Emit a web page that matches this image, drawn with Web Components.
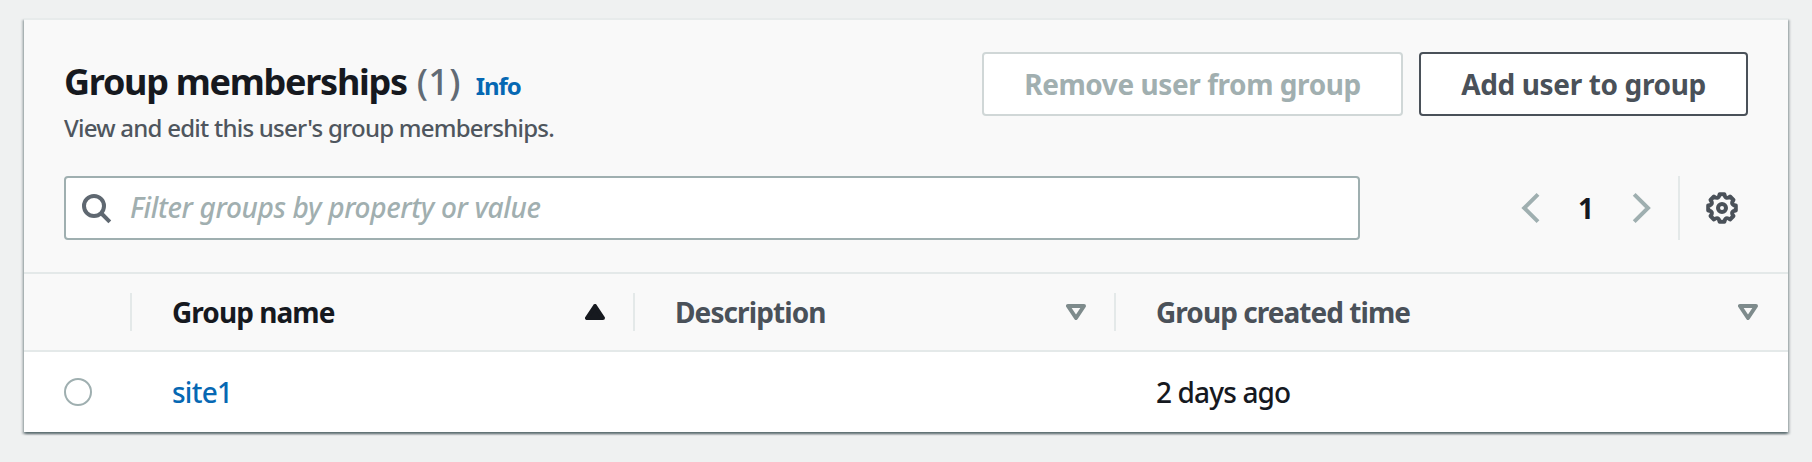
<!DOCTYPE html>
<html lang="en">
<head>
<meta charset="utf-8">
<title>Group memberships</title>
<style>
  body { margin: 0; height: 462px; overflow: hidden; background: #eff1f1; color: #16191f; font: 500 28px/36px "Noto Sans", "Open Sans", sans-serif; }
</style>
</head>
<body>
<membership-panel></membership-panel>
<script>
const define = (name, html, setup) => customElements.define(name, class extends HTMLElement {
  constructor() {
    super();
    const t = document.createElement('template');
    t.innerHTML = html;
    this.attachShadow({ mode: 'open' }).append(t.content.cloneNode(true));
  }
  connectedCallback() { if (setup) setup(this, this.shadowRoot); }
});

define('ui-button', `
<style>
  :host { display: block; }
  button { display: block; box-sizing: border-box; width: 100%; height: 64px; margin: 0; padding: 0; border: 2px solid #4a5159; border-radius: 4px; background: #fff; color: #4a5159; font: bold 28px/36px "Noto Sans", sans-serif; letter-spacing: inherit; white-space: nowrap; }
  :host([disabled]) button { border-color: #d0d7d7; color: #a1afb0; }
</style>
<button type="button"><slot></slot></button>`);

define('panel-header', `
<style>
  :host { display: flex; justify-content: space-between; height: 124px; }
  .text { padding-top: 8px; }
  .title { display: flex; align-items: baseline; height: 44px; line-height: 44px; white-space: nowrap; }
  h2 { margin: 0; font-size: 36px; font-weight: bold; letter-spacing: -1.28px; }
  .count { margin-left: 10px; font-size: 36px; letter-spacing: .3px; color: #616b75; }
  a { margin-left: 15px; font-size: 24px; font-weight: bold; letter-spacing: -1.1px; color: #0668b3; }
  p { margin: 6px 0 0; font-size: 24px; letter-spacing: -.76px; color: #4f565e; white-space: nowrap; }
  .actions { display: flex; gap: 16px; }
  .remove { width: 421px; letter-spacing: -.43px; }
  .add { width: 329px; letter-spacing: -.36px; }
</style>
<div class="text">
  <div class="title"><h2>Group memberships</h2><span class="count">(1)</span><a>Info</a></div>
  <p>View and edit this user's group memberships.</p>
</div>
<div class="actions">
  <ui-button class="remove" disabled>Remove user from group</ui-button>
  <ui-button class="add">Add user to group</ui-button>
</div>`);

define('search-field', `
<style>
  :host { display: flex; align-items: center; box-sizing: border-box; width: 1296px; height: 64px; padding-left: 14px; border: 2px solid #9fafb0; border-radius: 4px; background: #fff; }
  svg { display: block; flex: none; }
  span { margin: 0 0 2px 18px; font-style: italic; letter-spacing: -.35px; color: #a1afb0; }
</style>
<svg width="32" height="32" viewBox="0 0 32 32" fill="none" stroke="#5f6871" stroke-width="4"><circle cx="14" cy="14" r="10"/><path d="M21 21l8.8 8.8"/></svg>
<span>Filter groups by property or value</span>`);

define('page-nav', `
<style>
  :host { display: flex; align-items: center; height: 64px; }
  svg { display: block; }
  b { width: 20px; margin: 0 36px 1px; text-align: center; }
  .settings { display: flex; align-items: center; box-sizing: border-box; height: 64px; margin-left: 26px; padding: 0 10px 0 26px; border-left: 2px solid #e4e9e9; }
</style>
<svg width="20" height="32" viewBox="0 0 20 32" fill="none" stroke="#9fafb0" stroke-width="4"><path d="M18 2.3L4.2 16 18 29.7"/></svg>
<b>1</b>
<svg width="20" height="32" viewBox="0 0 20 32" fill="none" stroke="#9fafb0" stroke-width="4"><path d="M2.2 2.3L16 16 2.2 29.7"/></svg>
<div class="settings"><svg width="32" height="32" viewBox="-16 -16 32 32" fill="none" stroke="#4a5159" stroke-width="4"><path class="cog" stroke-linejoin="round"/><circle r="4"/></svg></div>`,
(host, root) => {
  const p = (r, deg) => [r * Math.sin(deg * Math.PI / 180), -r * Math.cos(deg * Math.PI / 180)].map(n => n.toFixed(2)).join(' ');
  let d = 'M' + p(14, -10);
  for (let a = 0; a < 360; a += 45) d += 'L' + p(14, a + 10) + 'Q' + p(8.6, a + 22.5) + ' ' + p(14, a + 35);
  root.querySelector('.cog').setAttribute('d', d + 'Z');
});

define('column-header', `
<style>
  :host { display: flex; align-items: center; justify-content: space-between; box-sizing: border-box; height: 38px; padding: 0 28px 0 40px; border-right: 2px solid #e4e9e9; color: #4a5159; font-weight: bold; letter-spacing: -.95px; white-space: nowrap; }
  :host([last]) { border-color: transparent; }
  :host([sorted]) { color: #16191f; }
  span { margin-bottom: 0; }
  svg { display: block; flex: none; fill: none; stroke: #7e8b8c; stroke-width: 4; stroke-linejoin: round; }
  :host([sorted]) svg { fill: #16191f; stroke: #16191f; transform: scaleY(-1); }
</style>
<span><slot></slot></span>
<svg width="20" height="16" viewBox="0 0 20 16"><path d="M2 2h16l-8 12z"/></svg>`);

define('group-table', `
<style>
  :host { display: block; }
  .row { display: grid; grid-template-columns: 108px 503px 481px 1fr; align-items: center; }
  .head { box-sizing: border-box; height: 80px; border: solid #e4e9e9; border-width: 2px 0; background: #f9f9f9; }
  .body { height: 80px; background: #fff; }
  .first { box-sizing: border-box; height: 38px; border-right: 2px solid #e4e9e9; }
  .desc { padding-left: 40px; letter-spacing: -.9px; }
  .radio { box-sizing: border-box; width: 28px; height: 28px; margin-left: 40px; border: 2px solid #9fafb0; border-radius: 50%; }
  .cell { padding: 0 0 1px 40px; }
  a { color: #0668b3; letter-spacing: -.75px; }
  .time { letter-spacing: -.85px; }
</style>
<div class="row head"><div class="first"></div><column-header sorted>Group name</column-header><column-header class="desc">Description</column-header><column-header last>Group created time</column-header></div>
<div class="row body"><div class="radio"></div><div class="cell"><a>site1</a></div><div class="cell"></div><div class="cell time">2 days ago</div></div>`);

define('membership-panel', `
<style>
  :host { display: block; padding: 18px 24px 0; }
  .card { border-top: 2px solid #e7ebeb; background: #f9f9f9; box-shadow: 0 2px 2px rgba(0,28,36,.4), 2px 2px 2px rgba(0,28,36,.2), -2px 2px 2px rgba(0,28,36,.2); }
  .top { padding: 32px 40px; }
  .tools { display: flex; justify-content: space-between; }
</style>
<div class="card">
  <div class="top"><panel-header></panel-header><div class="tools"><search-field></search-field><page-nav></page-nav></div></div>
  <group-table></group-table>
</div>`);
</script>
</body>
</html>
